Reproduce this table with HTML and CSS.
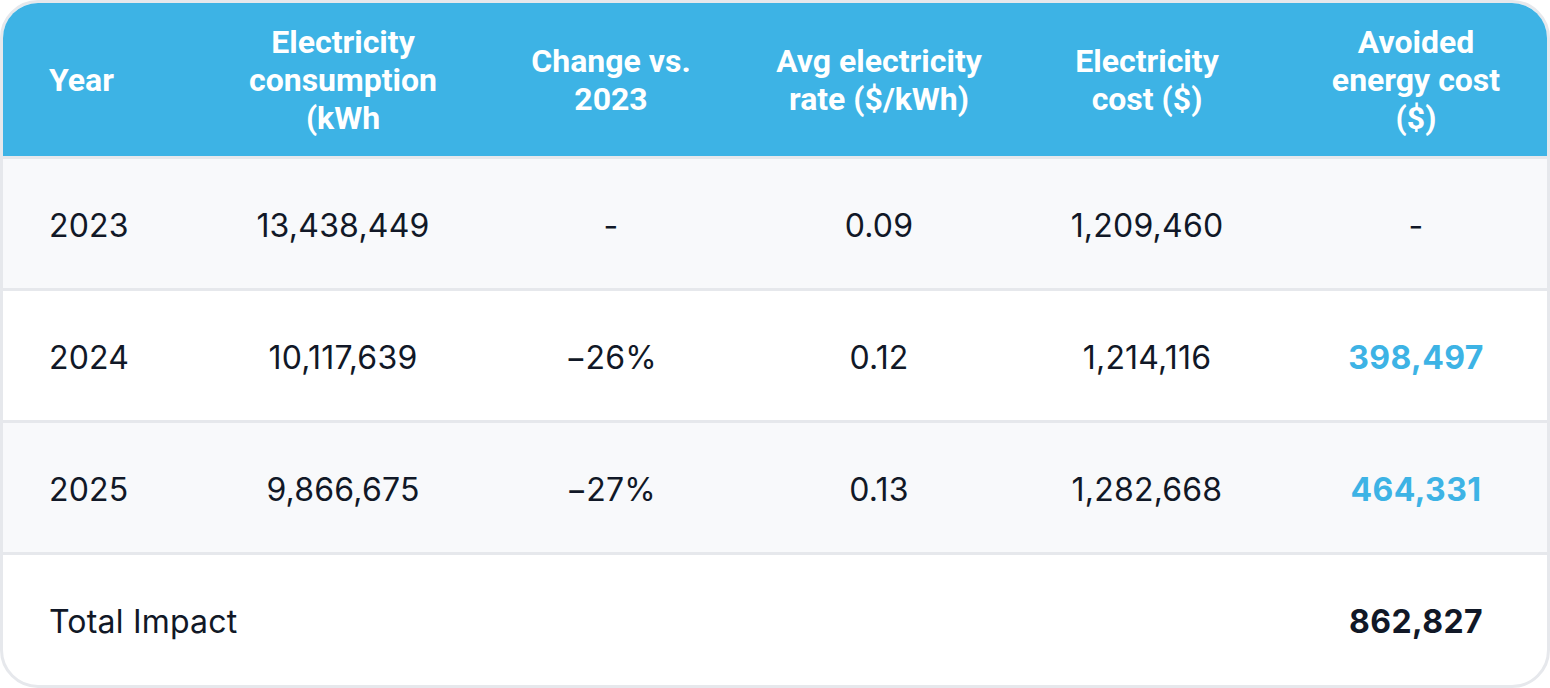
FILE: index.html
```html
<!DOCTYPE html>
<html lang="en">
<head>
<meta charset="utf-8">
<title>Avoided energy cost</title>
<link rel="stylesheet" href="styles.css">
</head>
<body>
<div class="card">
  <table class="impact">
    <colgroup>
      <col class="c-year">
      <col class="c-num">
      <col class="c-num">
      <col class="c-num">
      <col class="c-num">
      <col class="c-last">
    </colgroup>
    <thead>
      <tr>
        <th class="left">Year</th>
        <th>Electricity<br>consumption<br>(kWh</th>
        <th>Change vs.<br>2023</th>
        <th>Avg electricity<br>rate ($/kWh)</th>
        <th>Electricity<br>cost ($)</th>
        <th class="last">Avoided<br>energy cost<br>($)</th>
      </tr>
    </thead>
    <tbody>
      <tr class="alt">
        <td class="left">2023</td>
        <td>13,438,449</td>
        <td>-</td>
        <td>0.09</td>
        <td>1,209,460</td>
        <td class="last">-</td>
      </tr>
      <tr>
        <td class="left">2024</td>
        <td>10,117,639</td>
        <td>−26%</td>
        <td>0.12</td>
        <td>1,214,116</td>
        <td class="last accent">398,497</td>
      </tr>
      <tr class="alt">
        <td class="left">2025</td>
        <td>9,866,675</td>
        <td>−27%</td>
        <td>0.13</td>
        <td>1,282,668</td>
        <td class="last accent">464,331</td>
      </tr>
      <tr class="total">
        <td class="left" colspan="5">Total Impact</td>
        <td class="last strong">862,827</td>
      </tr>
    </tbody>
  </table>
</div>
</body>
</html>
```

FILE: styles.css
```css
html, body {
  margin: 0;
  padding: 0;
  background: #ffffff;
}

.card {
  box-sizing: border-box;
  width: 1550px;
  height: 688px;
  border: 3px solid #e6e8ec;
  border-radius: 38px;
  overflow: hidden;
  background: #ffffff;
}

.impact {
  width: 100%;
  border-collapse: collapse;
  table-layout: fixed;
  font-family: Inter, "Liberation Sans", sans-serif;
  color: #111827;
}

.c-year { width: 206px; }
.c-num { width: 268px; }
.c-last { width: 266px; }

.impact th {
  height: 153px;
  padding: 0;
  background: #3db3e5;
  color: #ffffff;
  font-family: Roboto, "Liberation Sans", sans-serif;
  font-weight: 700;
  font-size: 32px;
  line-height: 38px;
  text-align: center;
  vertical-align: middle;
  border-bottom: 3px solid #e6e8ec;
}

.impact td {
  height: 125px;
  padding: 4px 0 0 0;
  font-size: 32px;
  letter-spacing: 0.2px;
  font-weight: 400;
  text-align: center;
  vertical-align: middle;
  border-bottom: 3px solid #e6e8ec;
}

.impact .left {
  text-align: left;
  padding-left: 46px;
}

.impact .last {
  padding-left: 4px;
}

.impact tr.alt td {
  background: #f8f9fb;
}

.impact tr.total td {
  border-bottom: none;
}

.impact td.accent {
  color: #3db3e5;
  font-weight: 700;
  letter-spacing: 0.4px;
}

.impact td.strong {
  font-weight: 700;
  letter-spacing: 0.4px;
}
```
